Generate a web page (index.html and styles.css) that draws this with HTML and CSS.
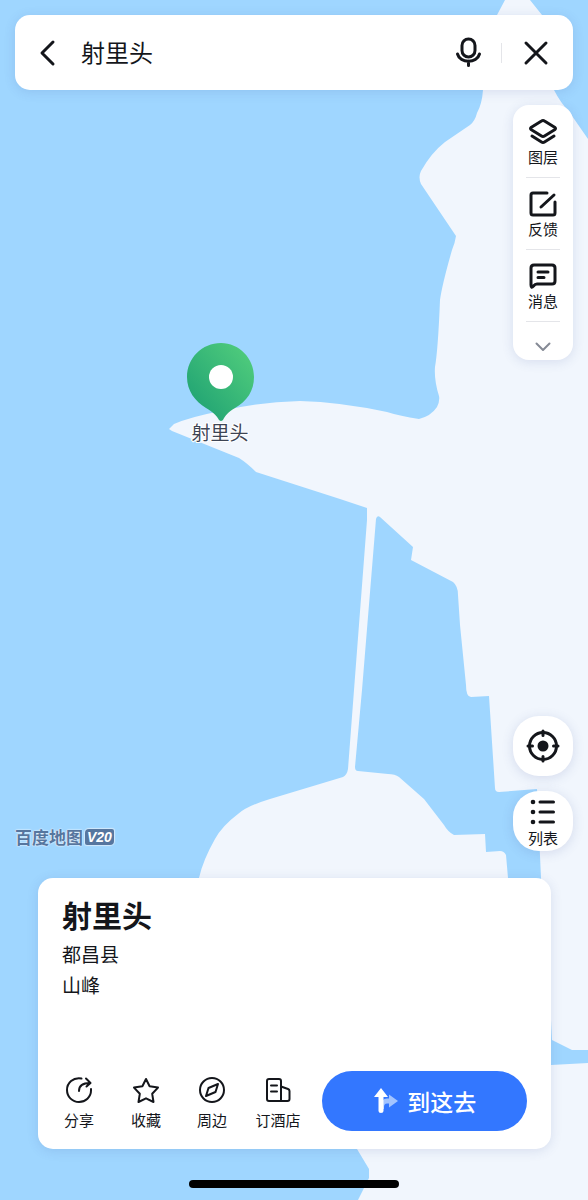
FILE: index.html
```html
<!DOCTYPE html>
<html lang="zh-CN">
<head>
    <meta charset="UTF-8">
    <meta name="viewport" content="width=device-width, initial-scale=1">
    <title>射里头</title>
    <link rel="stylesheet" href="styles.css">
</head>
<body>
<div class="app">

    <svg class="map" viewBox="0 0 588 1200" preserveAspectRatio="xMidYMid slice">
        <defs>
            <linearGradient id="pin" x1="1" y1="0" x2="0" y2="1">
                <stop offset="0.1" stop-color="#4fcb7c"/>
                <stop offset="0.9" stop-color="#1fa273"/>
            </linearGradient>
        </defs>
        <!-- 陆地 -->
        <path class="land" d="M505 0 L497 15 L483 90 Q482 104 477 113 Q475 121 470 125 L445 142 Q431 153 421 171 Q418 177 421 184 L456 236 Q455 243 452 250 Q442 285 440 300 Q438 350 435 367 Q434 380 439 396 Q440 401 437 407 Q431 416 419 419 Q400 416 387 412 Q340 402 300 401 Q258 402 221 411 Q190 417 174 424 L169 429 L172 431 L239 458 Q247 463 256 472 L340 499 L367 508 L367 520 L354 690 L348 769 Q347 775 343 777 L270 799 Q247 806 238 814 Q222 826 215 839 Q203 860 199 878 L230 1000 L357 1149 L369 1169 L369 1178 L358 1200 L588 1200 L588 0 Z"/>
        <!-- 水面 -->
        <path class="water" d="M530 0 L542 15 L554 90 Q560 102 570 113 L588 139 L588 0 Z"/>
        <path class="water" d="M376 519 Q377 515 380 517 L413 547 L411 560 L453 582 Q458 586 458 595 L460 625 L466 685 Q466 697 471 697 L489 696 L495 788 Q495 792 499 792 L537 789 L541 878 L551 1020 L552 1040 L572 1050 L588 1050 L588 1063 L551 1065 L508 878 L506 855 Q504 851 500 851 L486 852 L485 834 L454 835 Q448 832 444 825 L424 799 L399 777 Q395 774 388 774 L358 771 Q355 771 355 767 L362 690 Z"/>
        <!-- 地点标记 -->
        <path fill="url(#pin)" d="M221 343 C202 343 187 358 187 377 C187 391 195 401 206 408 C213 412 217 416 219 420 Q221 422 223 420 C225 416 228 412 235 408 C247 401 254 391 254 377 C254 358 239 343 221 343 Z"/>
        <circle cx="221" cy="377" r="12" fill="#fff"/>
        <text class="map-label" x="220" y="440" text-anchor="middle">射里头</text>
    </svg>

    <header class="search">
        <button class="icon-btn" aria-label="返回">
            <svg width="26" height="32" viewBox="0 0 26 32"><path d="M18 5 L7 16 L18 27"/></svg>
        </button>
        <input class="search-input" type="text" value="射里头" aria-label="搜索地点">
        <button class="icon-btn" aria-label="语音">
            <svg width="32" height="32" viewBox="0 0 32 32">
                <rect x="10" y="2" width="13" height="18" rx="6.5"/>
                <path d="M5.500 17 C8 26.500 25 26.500 27.500 17 M16.500 24 V28.500"/>
            </svg>
        </button>
        <span class="search-line"></span>
        <button class="icon-btn" aria-label="关闭">
            <svg width="32" height="32" viewBox="0 0 32 32"><path d="M6 6 L26 26 M26 6 L6 26"/></svg>
        </button>
    </header>

    <nav class="tools">
        <button class="tool">
            <svg width="32" height="32" viewBox="0 0 32 32">
                <path d="M14.500 5 Q16 4 17.500 5 L28 11.500 Q29 12.500 28 13.500 L17.500 20 Q16 21 14.500 20 L4 13.500 Q3 12.500 4 11.500 Z"/>
                <path d="M5 20 L14.500 26 Q16 27 17.500 26 L27 20"/>
            </svg>
            图层
        </button>
        <button class="tool">
            <svg width="32" height="32" viewBox="0 0 32 32">
                <path d="M20 5 H6 Q4 5 4 7 V25 Q4 27 6 27 H26 Q28 27 28 25 V14 M27 7 L14 19"/>
            </svg>
            反馈
        </button>
        <button class="tool">
            <svg width="32" height="32" viewBox="0 0 32 32">
                <path d="M7 5 H25 Q28 5 28 8 V21 Q28 24 25 24 H10 Q8 24 6.500 26 Q4 29 4 25 V8 Q4 5 7 5 Z"/>
                <path d="M11 12 H21 M11 17.500 H17"/>
            </svg>
            消息
        </button>
        <button class="tool tool-more" aria-label="展开">
            <svg width="18" height="12" viewBox="0 0 18 12"><path d="M2.500 2.500 L9 9 L15.500 2.500"/></svg>
        </button>
    </nav>

    <div class="middle">
        <div class="brand"><span class="brand-name">百度地图</span><span class="brand-ver">V20</span></div>
        <div class="round-btns">
            <button class="round-btn" aria-label="定位">
                <svg width="34" height="34" viewBox="0 0 34 34">
                    <circle cx="17" cy="17" r="13.500"/>
                    <circle class="solid" cx="17" cy="17" r="5.500"/>
                    <path d="M17 2 V6.500 M17 27.500 V32 M2 17 H6.500 M27.500 17 H32"/>
                </svg>
            </button>
            <button class="round-btn round-list">
                <svg width="28" height="28" viewBox="0 0 28 28">
                    <path d="M11 4 H24.500 M11 14 H24.500 M11 24 H24.500"/>
                    <circle class="solid" cx="4" cy="4" r="2.300"/>
                    <circle class="solid" cx="4" cy="14" r="2.300"/>
                    <circle class="solid" cx="4" cy="24" r="2.300"/>
                </svg>
                列表
            </button>
        </div>
    </div>

    <section class="card">
        <h1>射里头</h1>
        <p>都昌县</p>
        <p>山峰</p>
        <div class="actions">
            <button class="action">
                <svg width="30" height="30" viewBox="0 0 30 30">
                    <path d="M17.500 3.500 C9 2 3 8 3 15 C3 22 8.500 27 15 27 C21.500 27 27 22 27 15.500 V14"/>
                    <path d="M15 16 C15 10.500 19 8 26 8 M22 3.500 L26.500 8 L22.500 11.500"/>
                </svg>
                分享
            </button>
            <button class="action">
                <svg width="30" height="30" viewBox="0 0 30 30">
                    <path d="M15 4 L18.600 11.300 L27 12.600 L21.200 18.800 L22.500 27 L15 23.300 L7.500 27 L8.800 18.800 L3 12.600 L11.400 11.300 Z"/>
                </svg>
                收藏
            </button>
            <button class="action">
                <svg width="30" height="30" viewBox="0 0 30 30">
                    <circle cx="15" cy="15" r="12"/>
                    <path d="M21 9 L18.500 17 L9 21 L11.500 13 Z"/>
                </svg>
                周边
            </button>
            <button class="action">
                <svg width="30" height="30" viewBox="0 0 30 30">
                    <path d="M18 26 H6 Q4 26 4 24 V6 Q4 4 6 4 H16 Q18 4 18 6 Z M18 11.500 L25 14 Q26.500 14.500 26.500 16 V24 Q26.500 26 24.500 26 H18"/>
                    <path d="M8 10.500 H14 M8 16.500 H14"/>
                </svg>
                订酒店
            </button>
            <button class="go">
                <svg width="26" height="28" viewBox="0 0 26 28">
                    <path fill="#a3c4ff" d="M8 22 V18 Q8 12 14 11.500 H16 V7.500 L25 14 L16 20.500 V16.500 H14 Q11 16.500 11 20 V22 Z"/>
                    <path fill="#fff" d="M8 1 L15 10 H10.500 V24 Q10.500 26 8 26 Q5.500 26 5.500 24 V10 H1 Z"/>
                </svg>
                到这去
            </button>
        </div>
    </section>

    <div class="home-bar"></div>
</div>
</body>
</html>
```

FILE: styles.css
```css
* {
    box-sizing: border-box;
    margin: 0;
    padding: 0;
}

body {
    font-family: "Noto Sans CJK SC", sans-serif;
    color: #14161b;
    background: #9fd6ff;
}

button {
    border: 0;
    background: none;
    font-family: inherit;
    color: inherit;
    cursor: pointer;
}

svg {
    display: block;
    flex: none;
}

button svg {
    fill: none;
    stroke: #14161b;
    stroke-width: 3;
    stroke-linecap: round;
    stroke-linejoin: round;
}

button svg .solid {
    fill: #14161b;
    stroke: none;
}

.app {
    position: relative;
    display: flex;
    flex-direction: column;
    min-height: 100vh;
    padding: 15px 15px 12px;
    overflow: hidden;
}

/* 地图底图 */
.map {
    position: absolute;
    top: 0;
    left: 0;
    z-index: -1;
    width: 100%;
    height: 100%;
    background: #9fd6ff;
}

.land {
    fill: #f1f6fd;
}

.water {
    fill: #9fd6ff;
}

.map-label {
    font-size: 19px;
    fill: #3d4454;
    stroke: #fff;
    stroke-width: 2px;
    paint-order: stroke;
}

/* 搜索栏 */
.search {
    display: flex;
    align-items: center;
    height: 75px;
    padding: 0 21px 0 20px;
    border-radius: 15px;
    background: #fff;
    box-shadow: 0 2px 12px rgba(60, 80, 150, 0.14);
}

.search-input {
    flex: 1;
    min-width: 0;
    height: 36px;
    margin: 0 0 2px 20px;
    border: 0;
    outline: none;
    background: none;
    font-family: inherit;
    font-size: 24px;
    color: #14161b;
}

.search-line {
    width: 1px;
    height: 20px;
    margin: 0 18px 0 17px;
    background: #e4e5e9;
}

/* 右侧工具栏 */
.tools {
    align-self: flex-end;
    width: 60px;
    margin-top: 15px;
    padding-top: 1px;
    border-radius: 16px;
    background: #fff;
    box-shadow: 0 2px 12px rgba(60, 80, 150, 0.14);
}

.tool {
    display: flex;
    flex-direction: column;
    align-items: center;
    width: 34px;
    height: 72px;
    margin: 0 auto;
    padding-top: 10px;
    border-bottom: 1px solid #e4e5e9;
    font-size: 15px;
    line-height: 18px;
    white-space: nowrap;
}

.tool-more {
    height: 38px;
    padding-top: 19px;
    border-bottom: 0;
}

.tool-more svg {
    stroke: #858a95;
    stroke-width: 2;
}

.middle {
    display: flex;
    flex: 1;
    justify-content: space-between;
    align-items: flex-end;
    padding-top: 30px;
}

.brand {
    display: flex;
    align-items: center;
    gap: 2px;
    padding-bottom: 4px;
    line-height: 20px;
    color: #56769f;
}

.brand-name {
    font-size: 17px;
    font-weight: 700;
    text-shadow: 0 0 2px #fff, 0 0 1px #fff;
}

.brand-ver {
    padding: 0 2px;
    border-radius: 4px 2px 4px 2px;
    background: #56769f;
    box-shadow: 0 0 1px 1px #d3e9fb;
    font: italic 700 14px/16px "Liberation Sans", sans-serif;
    color: #fff;
}

.round-btns {
    display: flex;
    flex-direction: column;
    gap: 15px;
}

.round-btn {
    display: flex;
    flex-direction: column;
    align-items: center;
    justify-content: center;
    width: 60px;
    height: 60px;
    border-radius: 26px;
    background: #fff;
    box-shadow: 0 2px 12px rgba(60, 80, 150, 0.16);
    font-size: 15px;
    line-height: 20px;
}

.round-list {
    gap: 2px;
    padding-top: 3px;
}

/* 地点卡片 */
.card {
    margin: 27px 22px 0 23px;
    padding: 18px 24px;
    border-radius: 15px;
    background: #fff;
    box-shadow: 0 2px 12px rgba(60, 80, 150, 0.14);
}

.card h1 {
    margin-bottom: 6px;
    font-size: 30px;
    line-height: 36px;
}

.card p {
    font-size: 19px;
    line-height: 31px;
}

.actions {
    display: flex;
    align-items: center;
    margin-top: 71px;
}

.action {
    display: flex;
    flex: 1;
    flex-direction: column;
    align-items: center;
    gap: 4px;
    max-width: 66px;
    padding-top: 4px;
    font-size: 15px;
    line-height: 22px;
    white-space: nowrap;
}

.action svg {
    stroke-width: 2;
}

.actions .action:first-child {
    flex: none;
    width: 34px;
    margin-right: 17px;
}

.go {
    display: flex;
    flex: none;
    align-items: center;
    justify-content: center;
    gap: 8px;
    width: 44%;
    height: 60px;
    margin-left: auto;
    border-radius: 30px;
    background: #3377ff;
    font-size: 23px;
    font-weight: 500;
    color: #fff;
}

.go svg {
    stroke: none;
}

.home-bar {
    align-self: center;
    width: 210px;
    height: 8px;
    margin-top: 31px;
    border-radius: 4px;
    background: #000;
}
```
